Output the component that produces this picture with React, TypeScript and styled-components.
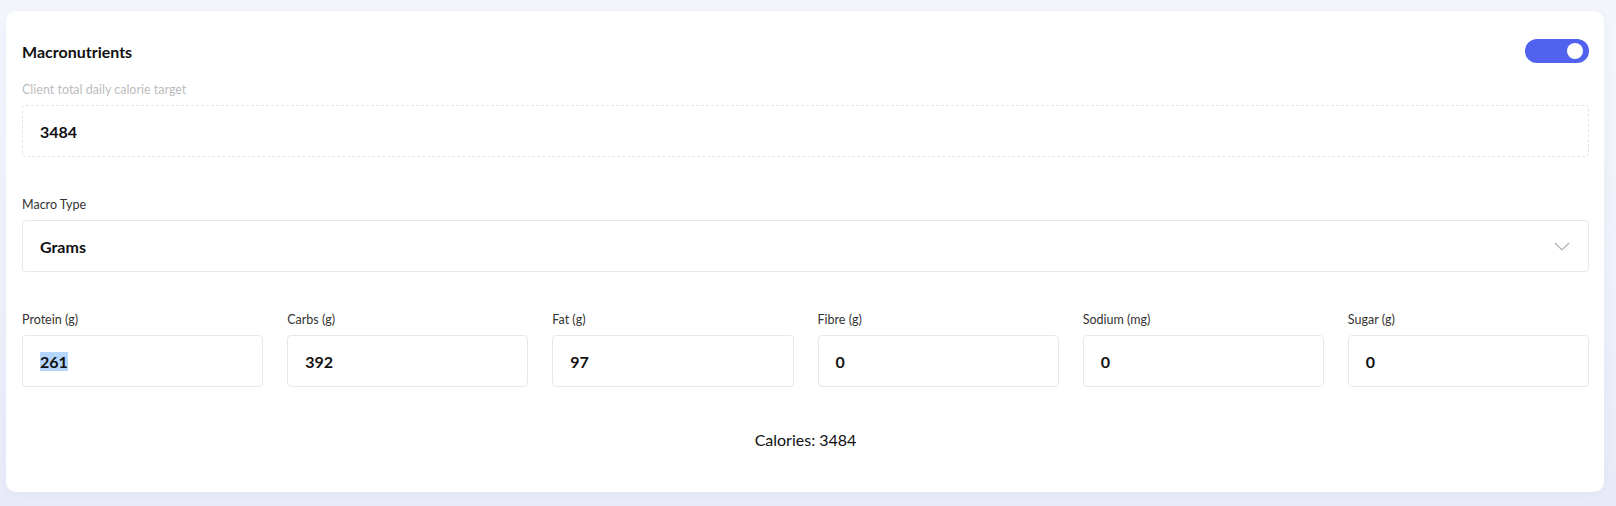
import React from 'react'
import styled, { createGlobalStyle } from 'styled-components'

const GlobalStyle = createGlobalStyle`
  html, body {
    margin: 0;
    padding: 0;
  }
  body {
    min-height: 506px;
    background: linear-gradient(180deg, #f4f6fc 0%, #eef1fa 60%, #e8ebf7 100%);
    font-family: 'Lato', 'Liberation Sans', sans-serif;
    color: #111;
  }
`

const Card = styled.section`
  margin: 11px 12px 0 6px;
  background: #fff;
  border-radius: 10px;
  box-shadow: 0 2px 10px rgba(120, 135, 200, 0.08);
  padding: 28px 15px 42px 16px;
`

const Header = styled.div`
  display: flex;
  align-items: center;
  justify-content: space-between;
  height: 24px;
`

const Title = styled.h2`
  margin: 0;
  font-size: 16px;
  font-weight: 700;
  color: #111;
`

const Toggle = styled.div`
  position: relative;
  width: 64px;
  height: 24px;
  border-radius: 12px;
  background: #5062ee;
  &:after {
    content: '';
    position: absolute;
    right: 6px;
    top: 4px;
    width: 16px;
    height: 16px;
    border-radius: 50%;
    background: #fff;
  }
`

const Field = styled.div<{ $top: number }>`
  margin-top: ${(p) => p.$top}px;
  display: flex;
  flex-direction: column;
  gap: 7px;
  min-width: 0;
`

const Label = styled.label<{ $muted?: boolean }>`
  font-size: 12.5px;
  line-height: 16px;
  color: ${(p) => (p.$muted ? '#bdbdbd' : '#333')};
`

const Box = styled.div<{ $dashed?: boolean }>`
  box-sizing: border-box;
  height: 52px;
  display: flex;
  align-items: center;
  justify-content: space-between;
  padding: 0 18px 0 17px;
  border: 1px ${(p) => (p.$dashed ? 'dashed #e6e6e6' : 'solid #e8e8e8')};
  border-radius: 4px;
  font-size: 16px;
  font-weight: 700;
  color: #111;
`

const Selected = styled.span`
  background: #b4d5fe;
`

const MacroGrid = styled.div`
  display: grid;
  grid-template-columns: repeat(6, 1fr);
  column-gap: 24px;
`

const Calories = styled.p`
  margin: 43px 0 0;
  text-align: center;
  font-size: 16px;
  line-height: 20px;
  color: #111;
`

const Chevron = () => (
  <svg width="16" height="9" viewBox="0 0 16 9" fill="none">
    <path d="M1 1l7 7 7-7" stroke="#b0b0b0" strokeWidth="1.2" />
  </svg>
)

const macros = [
  { label: 'Protein (g)', value: '261', selected: true },
  { label: 'Carbs (g)', value: '392' },
  { label: 'Fat (g)', value: '97' },
  { label: 'Fibre (g)', value: '0' },
  { label: 'Sodium (mg)', value: '0' },
  { label: 'Sugar (g)', value: '0' },
]

const App = () => {
  return (
    <>
      <GlobalStyle />
      <Card>
        <Header>
          <Title>Macronutrients</Title>
          <Toggle />
        </Header>
        <Field $top={19}>
          <Label $muted>Client total daily calorie target</Label>
          <Box $dashed>3484</Box>
        </Field>
        <Field $top={40}>
          <Label>Macro Type</Label>
          <Box>
            Grams
            <Chevron />
          </Box>
        </Field>
        <MacroGrid>
          {macros.map((m) => (
            <Field $top={40} key={m.label}>
              <Label>{m.label}</Label>
              <Box>{m.selected ? <Selected>{m.value}</Selected> : m.value}</Box>
            </Field>
          ))}
        </MacroGrid>
        <Calories>Calories: 3484</Calories>
      </Card>
    </>
  )
}

export default App
